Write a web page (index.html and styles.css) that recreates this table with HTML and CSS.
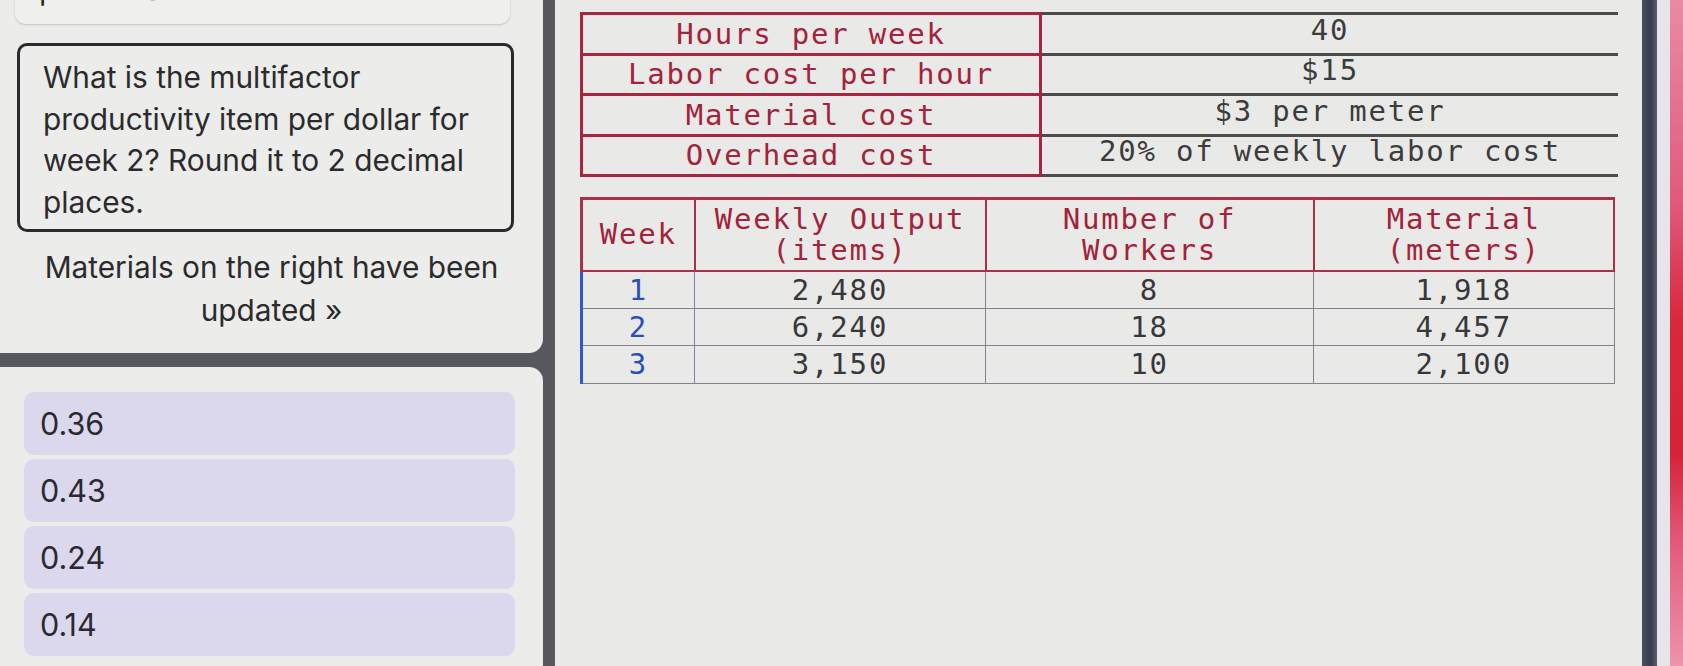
FILE: index.html
```html
<!DOCTYPE html>
<html lang="en">
<head>
<meta charset="utf-8">
<title>Multifactor productivity</title>
<link rel="stylesheet" href="styles.css">
</head>
<body>
<div class="screen">
  <aside class="sidebar">
    <section class="panel panel-question">
      <div class="prev-card"><p>per dollar for week 1.</p></div>
      <div class="question-box">
        <p>What is the multifactor productivity item per dollar for week 2? Round it to 2 decimal places.</p>
      </div>
      <p class="updated-note">Materials on the right have been updated&nbsp;&raquo;</p>
    </section>
    <section class="panel panel-answers">
      <div class="option">0.36</div>
      <div class="option">0.43</div>
      <div class="option">0.24</div>
      <div class="option">0.14</div>
    </section>
  </aside>

  <main class="materials">
    <table class="spec">
      <tr><th>Hours per week</th><td>40</td></tr>
      <tr><th>Labor cost per hour</th><td>$15</td></tr>
      <tr><th>Material cost</th><td>$3 per meter</td></tr>
      <tr><th>Overhead cost</th><td>20% of weekly labor cost</td></tr>
    </table>

    <table class="weeks">
      <thead>
        <tr>
          <th class="c-week">Week</th>
          <th class="c-out">Weekly Output<br>(items)</th>
          <th class="c-work">Number of<br>Workers</th>
          <th class="c-mat">Material<br>(meters)</th>
        </tr>
      </thead>
      <tbody>
        <tr><td class="wk">1</td><td>2,480</td><td>8</td><td>1,918</td></tr>
        <tr><td class="wk">2</td><td>6,240</td><td>18</td><td>4,457</td></tr>
        <tr><td class="wk">3</td><td>3,150</td><td>10</td><td>2,100</td></tr>
      </tbody>
    </table>
  </main>

  <div class="bezel"></div>
  <div class="bezel-gap"></div>
  <div class="wallpaper"></div>
</div>
</body>
</html>
```

FILE: styles.css
```css
* { box-sizing: border-box; }

html, body {
  margin: 0;
  padding: 0;
  width: 1683px;
  height: 666px;
  overflow: hidden;
  background: #e9e9e7;
}

.screen {
  display: flex;
  width: 1683px;
  height: 666px;
}

/* ---------- left sidebar ---------- */
.sidebar {
  width: 555px;
  flex: none;
  background: #56585d;
  display: flex;
  flex-direction: column;
  gap: 14px;
  font-family: "Inter", "Open Sans", sans-serif;
  color: #2b2b2d;
}

.panel {
  background: #ececea;
  margin-right: 12px;
}

.panel-question {
  height: 353px;
  border-bottom-right-radius: 14px;
  padding: 0 29px 0 17px;
  display: flex;
  flex-direction: column;
}

.prev-card {
  margin: -36px 0 0 -2px;
  width: 495px;
  height: 60px;
  background: #efefed;
  border-radius: 10px;
  box-shadow: 0 1px 2px rgba(0,0,0,0.18);
  padding: 0 24px 14px;
  display: flex;
  align-items: flex-end;
}

.prev-card p {
  margin: 0;
  font-size: 30px;
  line-height: 41px;
}

.question-box {
  margin-top: 19px;
  width: 497px;
  height: 189px;
  border: 3px solid #2a2a2c;
  border-radius: 10px;
  padding: 11px 16px 6px 23px;
}

.question-box p {
  margin: 0;
  font-size: 29.8px;
  line-height: 41.5px;
}

.updated-note {
  margin: 14px 0 0 -17px;
  width: 543px;
  padding: 0 30px;
  text-align: center;
  font-size: 29.8px;
  line-height: 43px;
}

.panel-answers {
  flex: 1;
  border-top-right-radius: 14px;
  padding: 25px 28px 0 24px;
  display: flex;
  flex-direction: column;
  gap: 4px;
}

.option {
  height: 63px;
  background: #dbd8ed;
  border-radius: 10px;
  padding-left: 16px;
  display: flex;
  align-items: center;
  font-size: 30.5px;
  color: #2a2a30;
}

/* ---------- materials ---------- */
.materials {
  flex: 1;
  padding: 12px 0 0 25px;
  font-family: "DejaVu Sans Mono", monospace;
}

.spec {
  border-collapse: collapse;
  width: 1038px;
  font-size: 29px;
  letter-spacing: 1.8px;
}

.spec th {
  width: 459px;
  height: 40.5px;
  padding: 0;
  font-weight: 400;
  color: #a1233c;
  border: 3px solid #a8243f;
  text-align: center;
  line-height: 32px;
}

.spec td {
  padding: 0 0 8px;
  color: #3c3c3c;
  text-align: center;
  border-top: 3px solid #4a4c4a;
  border-bottom: 3px solid #4a4c4a;
  line-height: 26px;
}

.weeks {
  margin-top: 20px;
  border-collapse: collapse;
  width: 1035px;
  font-size: 29px;
  letter-spacing: 1.8px;
}

.weeks th {
  height: 72px;
  padding: 0;
  font-weight: 400;
  color: #a1233c;
  line-height: 31px;
  border: 2px solid #a8304a;
  border-top-width: 3px;
}

.weeks th.c-week { width: 113px; border-left-width: 3px; }
.weeks th.c-out { width: 291px; }
.weeks th.c-work { width: 328px; }

.weeks td {
  height: 37.5px;
  padding: 0;
  text-align: center;
  color: #38383c;
  line-height: 32px;
  border: 1.5px solid #85808f;
}

.weeks td.wk {
  color: #2b4fb8;
  border-left: 3px solid #3457c9;
  border-right-color: #7f7fb8;
}

/* ---------- screen edge ---------- */
.bezel {
  width: 15px;
  flex: none;
  background: linear-gradient(90deg, #4a4d5c, #3a3d50 60%, #5a5d6c);
}

.bezel-gap {
  width: 13px;
  flex: none;
  background: #e7e5ea;
}

.wallpaper {
  width: 13px;
  flex: none;
  background: linear-gradient(180deg, #e98aa4 0%, #e25a7e 30%, #d8283c 48%, #d62236 68%, #e45b7d 82%, #ee93ad 100%);
}
```
